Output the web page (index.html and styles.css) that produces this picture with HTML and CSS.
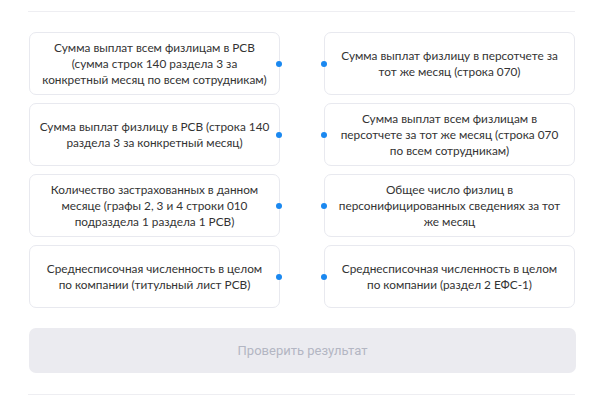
FILE: index.html
```html
<!DOCTYPE html>
<html lang="ru">
<head>
    <meta charset="UTF-8">
    <meta name="viewport" content="width=device-width, initial-scale=1.0">
    <title>Сопоставление показателей</title>
    <link rel="stylesheet" href="styles.css">
</head>
<body>
    <div class="task">
        <div class="divider"></div>

        <div class="pairs">
            <div class="card card-left">Сумма выплат всем физлицам в РСВ (сумма строк 140 раздела 3 за конкретный месяц по всем сотрудникам)<span class="dot"></span></div>
            <div class="card card-right"><span class="dot"></span>Сумма выплат физлицу в персотчете за тот же месяц (строка 070)</div>

            <div class="card card-left">Сумма выплат физлицу в РСВ (строка 140 раздела 3 за конкретный месяц)<span class="dot"></span></div>
            <div class="card card-right"><span class="dot"></span>Сумма выплат всем физлицам в персотчете за тот же месяц (строка 070 по всем сотрудникам)</div>

            <div class="card card-left">Количество застрахованных в данном месяце (графы 2, 3 и 4 строки 010 подраздела 1 раздела 1 РСВ)<span class="dot"></span></div>
            <div class="card card-right"><span class="dot"></span>Общее число физлиц в персонифицированных сведениях за тот же месяц</div>

            <div class="card card-left">Среднесписочная численность в целом по&nbsp;компании (титульный лист РСВ)<span class="dot"></span></div>
            <div class="card card-right"><span class="dot"></span>Среднесписочная численность в целом по&nbsp;компании (раздел 2 ЕФС-1)</div>
        </div>

        <button class="check-btn" disabled>Проверить результат</button>

        <div class="divider"></div>
    </div>
</body>
</html>
```

FILE: styles.css
```css
* {
    margin: 0;
    padding: 0;
    box-sizing: border-box;
}

body {
    background: #fff;
    font-family: Lato, 'Liberation Sans', sans-serif;
    color: #333;
}

.task {
    padding: 11px 27px 0 28px;
}

.divider {
    height: 1px;
    background: #eeeef2;
}

.pairs {
    display: grid;
    grid-template-columns: 251px 251px;
    column-gap: 44px;
    row-gap: 8px;
    padding: 20px 0 0 1px;
}

.card {
    position: relative;
    height: 63px;
    display: flex;
    align-items: center;
    justify-content: center;
    padding: 0 8px;
    border: 1px solid #e8e9ef;
    border-radius: 7px;
    font-size: 11.8px;
    line-height: 16px;
    text-align: center;
}

.dot {
    position: absolute;
    top: 50%;
    width: 6px;
    height: 6px;
    margin-top: -3px;
    border-radius: 50%;
    background: #1a88f0;
}

.card-left .dot {
    right: -3px;
}

.card-right .dot {
    left: -4px;
}

.check-btn {
    display: block;
    width: 547px;
    height: 45px;
    margin: 20px 0 21px 1px;
    border: none;
    border-radius: 7px;
    background: #ebebf0;
    color: #b3b6c3;
    font-family: Roboto, 'Liberation Sans', sans-serif;
    font-size: 13px;
}
```
